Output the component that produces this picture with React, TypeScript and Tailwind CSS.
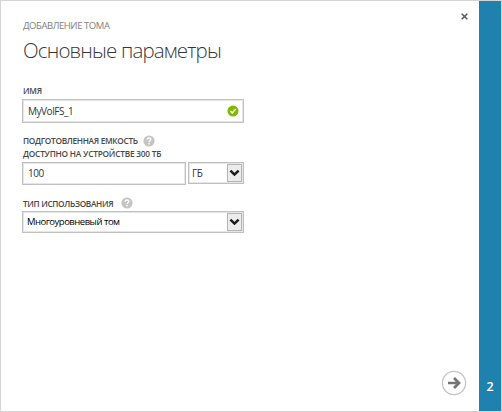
import React from 'react';

function Help() {
  return (
    <svg width="12" height="12" viewBox="0 0 12 12" className="shrink-0">
      <circle cx="6" cy="6" r="5.6" fill="#c4c4c4" />
      <path d="M4.1 4.6C4.2 2.4 7.9 2.5 7.8 4.5C7.7 5.8 6 5.7 6 7.2" fill="none" stroke="#fff" strokeWidth="1.3" />
      <rect x="5.3" y="8" width="1.4" height="1.4" fill="#fff" />
    </svg>
  );
}

function DropButton() {
  return (
    <span className="flex h-[18px] w-[15px] shrink-0 items-center justify-center border border-[#b4b4b4] bg-[#ececec]">
      <svg width="11" height="8" viewBox="0 0 11 8">
        <path d="M1.4 1.6L5.5 5.6L9.6 1.6" fill="none" stroke="#1c1c1c" strokeWidth="2.5" />
      </svg>
    </span>
  );
}

const label = 'flex items-center whitespace-nowrap text-[8.3px] leading-[12px] font-semibold text-[#484848]';
const box = 'flex items-center border border-[#c0c0c0] bg-white shadow-[inset_0_0_0_1px_#e6e6e6] text-[10px] text-[#333]';

export default function App() {
  return (
    <div className="flex h-[412px] w-[502px] overflow-hidden border border-[#d4d4d4] bg-white font-['Open_Sans','Noto_Sans',sans-serif]">
      <main className="flex flex-1 flex-col pl-[21px]">
        <h2 className="mt-[18px] h-[14px] whitespace-nowrap pl-px text-[9.5px] leading-[14px] text-[#808080]">
          <span className="tracking-[-0.43px]">ДОБАВЛЕНИЕ ТОМА</span>
        </h2>
        <h1 className="mt-[2px] h-[30px] whitespace-nowrap pl-px text-[20.5px] leading-[30px] font-light text-[#383838]">
          <span className="tracking-[-0.84px]">Основные параметры</span>
        </h1>
        <div className={`${label} mt-[20px] h-[12px] pl-px`}><span className="tracking-[-0.2px]">ИМЯ</span></div>
        <div className={`${box} mt-[2px] h-[24px] w-[222px] justify-between pr-[4px] pl-[5px]`}>
          <span className="pt-px tracking-[-0.45px]">MyVolFS_1</span>
          <svg width="12" height="12" viewBox="0 0 12 12">
            <circle cx="6" cy="6" r="5.5" fill="#7fba00" />
            <path d="M3.4 6L5.3 7.9L8.7 4.1" fill="none" stroke="#fff" strokeWidth="1.5" />
          </svg>
        </div>
        <div className={`${label} mt-[12px] h-[12px] gap-[5px] pl-px`}>
          <span className="tracking-[-0.32px]">ПОДГОТОВЛЕННАЯ ЕМКОСТЬ</span>
          <Help />
        </div>
        <div className={`${label} mt-[1px] h-[12px] pl-px`}><span className="tracking-[-0.22px]">ДОСТУПНО НА УСТРОЙСТВЕ 300 ТБ</span></div>
        <div className="mt-[2px] flex w-[222px] justify-between">
          <div className={`${box} h-[23px] w-[164px] pl-[5px]`}><span className="tracking-[-0.5px]">100</span></div>
          <div className={`${box} h-[22px] w-[56px] justify-between pr-[1px] pl-[3px]`}>
            <span className="pt-px tracking-[-0.4px]">ГБ</span>
            <DropButton />
          </div>
        </div>
        <div className={`${label} mt-[12px] h-[12px] gap-[8px] pl-px`}>
          <span className="pt-[2px] tracking-[-0.34px]">ТИП ИСПОЛЬЗОВАНИЯ</span>
          <Help />
        </div>
        <div className={`${box} mt-[2px] h-[22px] w-[222px] justify-between pr-[1px] pl-[4px]`}>
          <span className="text-[9.5px] tracking-[-0.5px] text-black">Многоуровневый том</span>
          <DropButton />
        </div>
      </main>
      <div className="flex w-[40px] flex-col items-center justify-between pt-[12px] pb-[15px]">
        <svg width="7" height="7" viewBox="0 0 7 7" className="ml-[11px]">
          <path d="M0.7 0.7L6.3 6.3M6.3 0.7L0.7 6.3" stroke="#5c5c5c" strokeWidth="1.6" />
        </svg>
        <svg width="26" height="26" viewBox="0 0 26 26" className="mr-[11px]">
          <circle cx="13" cy="13" r="11.6" fill="#fff" stroke="#c4c4c4" strokeWidth="1.3" />
          <path d="M7 13H17.5M13 8L18 13L13 18" fill="none" stroke="#747474" strokeWidth="2.7" />
        </svg>
      </div>
      <aside className="flex w-[22px] flex-col items-center justify-end bg-[#1f81ae] pb-[15px] text-[12.5px] leading-[18px] font-semibold text-white">
        <span>2</span>
      </aside>
    </div>
  );
}
